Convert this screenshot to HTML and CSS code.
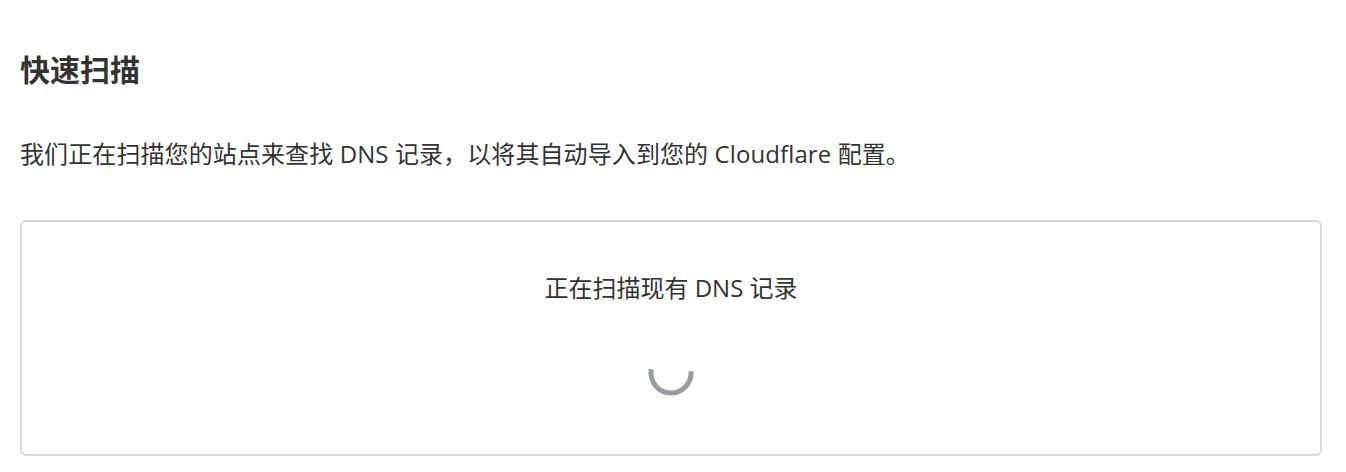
FILE: index.html
```html
<!DOCTYPE html>
<html lang="zh-CN">
<head>
<meta charset="utf-8">
<title>快速扫描</title>
<link rel="stylesheet" href="styles.css">
</head>
<body>
<main class="page">
  <h1 class="title">快速扫描</h1>
  <p class="intro">我们正在扫描您的站点来查找 DNS 记录，以将其自动导入到您的 Cloudflare 配置。</p>
  <section class="card">
    <p class="card-text">正在扫描现有 DNS 记录</p>
    <svg class="spinner" width="46" height="46" viewBox="0 0 46 46" aria-hidden="true">
      <circle cx="23" cy="23" r="20" fill="none" stroke="#989ca0" stroke-width="5" stroke-dasharray="68 200" transform="rotate(-5 23 23)"/>
    </svg>
  </section>
</main>
</body>
</html>
```

FILE: styles.css
```css
html, body {
  margin: 0;
  padding: 0;
  background: #ffffff;
}

body {
  font-family: "Open Sans", "Noto Sans CJK SC", sans-serif;
  color: #333333;
}

.page {
  padding: 0 24px 0 20px;
  display: flex;
  flex-direction: column;
}

.title {
  margin: 50px 0 0 0;
  font-size: 30px;
  line-height: 40px;
  font-weight: 700;
  color: #333333;
}

.intro {
  margin: 48px 0 0 0;
  font-size: 24px;
  line-height: 32px;
  letter-spacing: 0.1px;
  color: #333333;
}

.card {
  margin-top: 50px;
  box-sizing: border-box;
  height: 236px;
  border: 2px solid #d9d9d9;
  border-radius: 6px;
  display: flex;
  flex-direction: column;
  align-items: center;
  padding-top: 50px;
}

.card-text {
  margin: 0;
  font-size: 24px;
  line-height: 32px;
  color: #333333;
}

.spinner {
  margin-top: 46px;
  display: block;
}
```
